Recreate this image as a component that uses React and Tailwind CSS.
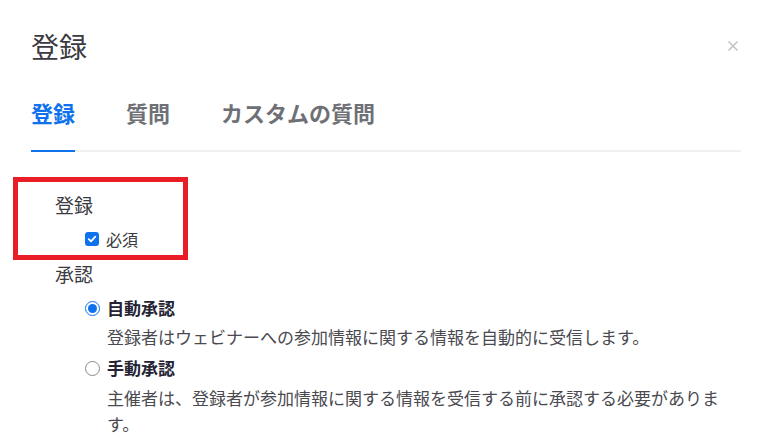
import React, { useState } from 'react';

const tabs = ['登録', '質問', 'カスタムの質問'];

function CheckBox() {
  return (
    <span className="flex h-[14px] w-[14px] items-center justify-center rounded-[3px] bg-[#0e72ed]">
      <svg width="10" height="10" viewBox="0 0 10 10" fill="none">
        <path d="M1.8 5.2 L4 7.4 L8.3 2.6" stroke="white" strokeWidth="1.8" strokeLinecap="round" strokeLinejoin="round" />
      </svg>
    </span>
  );
}

function Radio({ checked }) {
  return checked ? (
    <span className="flex h-[15px] w-[15px] items-center justify-center rounded-full border-[1.5px] border-[#0e72ed]">
      <span className="h-[9px] w-[9px] rounded-full bg-[#0e72ed]" />
    </span>
  ) : (
    <span className="h-[15px] w-[15px] rounded-full border border-[#8a8a8a]" />
  );
}

export default function App() {
  const [active] = useState(0);

  return (
    <div
      className="relative h-[444px] w-[772px] overflow-hidden bg-white px-[31px]"
      style={{ fontFamily: '"Noto Sans CJK JP", "Noto Sans", sans-serif' }}
    >
      {/* header */}
      <div className="flex items-center justify-between pt-[32px]">
        <h1 className="text-[28px] font-normal leading-[28px] text-[#3a3a40]">登録</h1>
        <svg width="12" height="12" viewBox="0 0 12 12" className="mr-[2px]">
          <path d="M1.5 1.5 L10.5 10.5 M10.5 1.5 L1.5 10.5" stroke="#c4c4c4" strokeWidth="1.6" />
        </svg>
      </div>

      {/* tabs */}
      <div className="mt-[36px] flex gap-[51px] border-b-2 border-[#f0f0f2]">
        {tabs.map((t, i) => (
          <div
            key={t}
            className={
              i === active
                ? '-mb-[2px] border-b-2 border-[#0e72ed] pb-[22px] text-[22px] font-bold leading-[32px] text-[#0e72ed]'
                : '-mb-[2px] border-b-2 border-transparent pb-[22px] text-[22px] font-bold leading-[32px] text-[#6e7076]'
            }
          >
            {t}
          </div>
        ))}
      </div>

      {/* registration box */}
      <div className="-ml-[18px] mt-[25px] h-[83px] w-[175px] border-[5px] border-[#e81d25] pl-[37px] pt-[10px]">
        <div className="text-[19px] leading-[26px] text-[#3a3a40]">登録</div>
        <div className="mt-[9px] flex items-center gap-[7px] pl-[30px]">
          <CheckBox />
          <span className="text-[16px] leading-[24px] text-[#3a3a40]">必須</span>
        </div>
      </div>

      {/* approval */}
      <div className="pl-[24px]">
        <div className="mt-[1px] text-[19px] leading-[26px] text-[#3a3a40]">承認</div>
        <div className="pl-[30px]">
          <div className="mt-[9px] flex items-center gap-[7px]">
            <Radio checked />
            <span className="text-[17px] font-bold leading-[24px] text-[#232333]">自動承認</span>
          </div>
          <p className="mt-[4px] pl-[22px] text-[17px] leading-[26px] text-[#4a4a50]">
            登録者はウェビナーへの参加情報に関する情報を自動的に受信します。
          </p>
          <div className="mt-[6px] flex items-center gap-[7px]">
            <Radio checked={false} />
            <span className="text-[17px] font-bold leading-[24px] text-[#232333]">手動承認</span>
          </div>
          <p className="mt-[5px] w-[642px] pl-[22px] text-[17px] leading-[26px] text-[#4a4a50]">
            主催者は、登録者が参加情報に関する情報を受信する前に承認する必要があります。
          </p>
        </div>
      </div>
    </div>
  );
}
